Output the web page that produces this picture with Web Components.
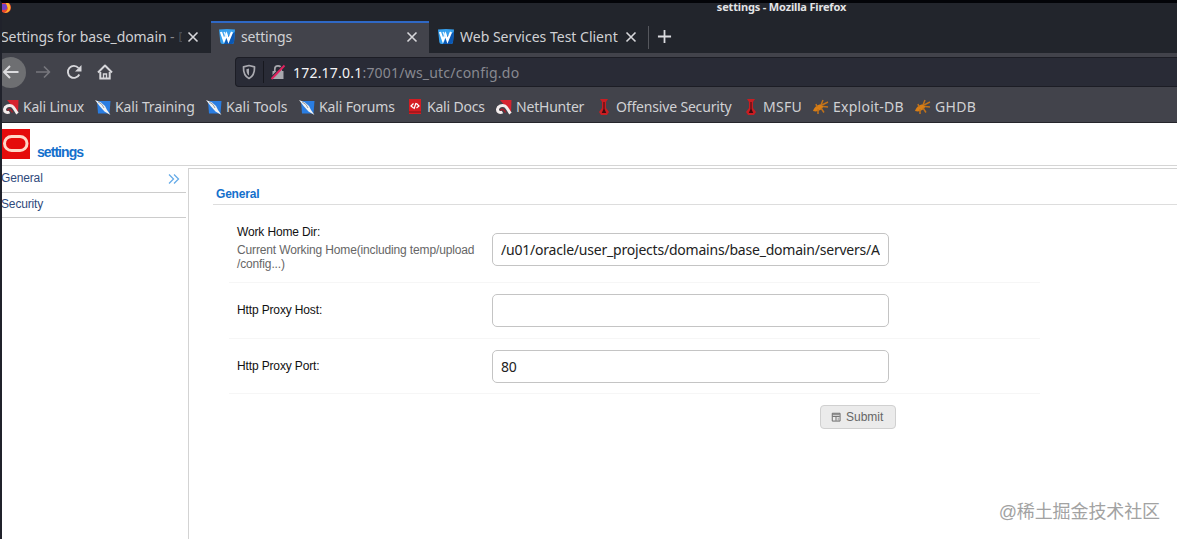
<!DOCTYPE html>
<html lang="en">
<head>
<meta charset="utf-8">
<title>settings</title>
<style>
  html, body { margin: 0; height: 100%; overflow: hidden; background: #fff; }
</style>
</head>
<body>
<browser-window heading="settings - Mozilla Firefox">
  <browser-tab slot="tabs" style="width: 209px" first>Settings for base_domain <span style="color: #85878c">-</span> <span style="color: #4a4d54">D</span></browser-tab>
  <browser-tab slot="tabs" style="width: 218px" icon="weblogic" active>settings</browser-tab>
  <browser-tab slot="tabs" style="width: 219px" icon="weblogic">Web Services Test Client</browser-tab>

  <book-mark slot="bookmarks" icon="dragon" style="width: 92px; letter-spacing: -.2px">Kali Linux</book-mark>
  <book-mark slot="bookmarks" icon="kali" style="width: 111px; letter-spacing: -.1px">Kali Training</book-mark>
  <book-mark slot="bookmarks" icon="kali" style="width: 93px">Kali Tools</book-mark>
  <book-mark slot="bookmarks" icon="kali" style="width: 108px; letter-spacing: -.15px">Kali Forums</book-mark>
  <book-mark slot="bookmarks" icon="docs" style="width: 89px; letter-spacing: -.2px">Kali Docs</book-mark>
  <book-mark slot="bookmarks" icon="dragon" style="width: 100px; letter-spacing: -.2px">NetHunter</book-mark>
  <book-mark slot="bookmarks" icon="offsec" style="width: 147px; letter-spacing: -.17px">Offensive Security</book-mark>
  <book-mark slot="bookmarks" icon="offsec" style="width: 70px; letter-spacing: .3px">MSFU</book-mark>
  <book-mark slot="bookmarks" icon="bug" style="width: 102px; letter-spacing: .25px">Exploit-DB</book-mark>
  <book-mark slot="bookmarks" icon="bug" style="letter-spacing: .3px">GHDB</book-mark>

  <settings-page heading="settings">
    <side-item slot="menu" current>General</side-item>
    <side-item slot="menu">Security</side-item>
    <form-row style="height: 60px" label="Work Home Dir:" value="/u01/oracle/user_projects/domains/base_domain/servers/A">Current Working Home(including temp/upload<br>/config...)</form-row>
    <form-row style="height: 55px" label="Http Proxy Host:"></form-row>
    <form-row style="height: 54px" label="Http Proxy Port:" value="80"></form-row>
    <submit-button>Submit</submit-button>
  </settings-page>
</browser-window>
<water-mark>@稀土掘金技术社区</water-mark>

<script>
const ICONS = {
  firefox: `<circle cx="8" cy="8" r="8" fill="#e8462f"/><circle cx="6" cy="7" r="4.6" fill="#7141c6"/><path d="M8 0c5 1 8 5 7 10-1 4-5 6-9 6 4-2 6-5 5-8-1-3-2-5-3-8z" fill="#ffb52e"/>`,
  weblogic: `<path d="M0 .5Q8-.5 16 .5L15 13q-.2 2-2 2H3.500Q1.500 15 1.300 13z" fill="#36a0ee"/><path d="M9 7l7-4-1 10q-.2 2-2 2H5z" fill="#0b58b4"/><path d="M2 3L5 11.500 7.500 5.500 9.500 11.500 13 3" fill="none" stroke="#fff" stroke-width="2.200"/><path d="M5.200 3l2 5" stroke="#e2f3ff" stroke-width="1.600"/>`,
  dragon: `<path d="M4 1h11.500l-.5 13z" fill="#d6232f"/><path d="M6.500 13C3.500 14.500 1.300 12.500 1.500 10.300 2 7 6 5.500 9 7c2.500 1.500 3 4.500 5.500 7.500" fill="none" stroke="#f4eded" stroke-width="3"/><path d="M4.500 11.500c1.500-2 3.500-1.500 5 2" fill="none" stroke="#a81d2a" stroke-width="1.500"/>`,
  kali: `<path d="M2 2h13.500l-1 12.500H3z" fill="#2a7de1"/><path d="M0 1l6 2.500 4 3.500 2 4 3.500 5-6-3.500-4.500-5z" fill="#f1f3f4"/><path d="M3 2.800l4 2.700 2 3.500" stroke="#6d7480" stroke-width=".7" fill="none"/>`,
  docs: `<path d="M2 0h12v15H2z" fill="#d51c22"/><path d="M2 13h12" stroke="#7b1216"/><path d="M6.500 4.500L4 7l2.500 2M9.500 4.500L12 7 9.500 9M9 4L7 10" stroke="#fff" stroke-width="1.200" fill="none"/>`,
  offsec: `<path d="M4 0h8l-2 3v6l3 4-2 3H5l-2-3 3-4V3z" fill="#c91d22"/><path d="M7.500 3h1v7l1.700 4H5.800l1.700-4z" fill="#3b0c10"/>`,
  bug: `<path d="M0 12c1.500-4 4-6.500 8-6.500l2.500 2c-2 3.500-6 6-10.500 4.500z" fill="#d87e16"/><path d="M8 6l2-5M9 6l6-3M10 7.500l5 .5M8 9l3 4.500M5 10v5M4 8L3 5" stroke="#c27219" stroke-width="1.500" fill="none"/>`,
  close: `<path d="M3.500 3.500l9 9M12.500 3.500l-9 9" stroke="#d7d7db" stroke-width="1.600"/>`,
  plus: `<path d="M8 1v14M1 8h14" stroke="#dcdce0" stroke-width="1.900"/>`,
  back: `<path d="M15.500 8H1M7 2L1 8l6 6" fill="none" stroke="#dcdcdf" stroke-width="2" stroke-linejoin="round"/>`,
  forward: `<path d="M1 8h13.500M9 2.500L14.500 8 9 13.500" fill="none" stroke="#77777d" stroke-width="1.700" stroke-linejoin="round"/>`,
  reload: `<path d="M13.300 10.500A6 6 0 1 1 12.500 4" fill="none" stroke="#d7d7db" stroke-width="1.900"/><path d="M15.500 1v6.500H9z" fill="#d7d7db"/>`,
  home: `<path d="M1 8.500L8 1.500l7 7" fill="none" stroke="#d7d7db" stroke-width="2" stroke-linejoin="round"/><path d="M3.300 8v6.500h9.400V8" fill="none" stroke="#d7d7db" stroke-width="2"/><path d="M6.500 14v-4h3v4" fill="none" stroke="#d7d7db" stroke-width="1.400"/>`,
  shield: `<path d="M8 1.500l5.500 1.300c.2 5.500-1 9.500-5.500 11.700C3.500 12.300 2.300 8.300 2.500 2.800z" fill="none" stroke="#aaaab0" stroke-width="1.700" stroke-linejoin="round"/><path d="M8 4.500v7c-2-1.300-2.600-3.500-2.600-6.300z" fill="#aaaab0"/>`,
  lock: `<path d="M2.500 7h11v8h-11z" fill="#a7a7ad"/><path d="M4.800 7V5a3.200 3.200 0 0 1 6.400 0v2" fill="none" stroke="#a7a7ad" stroke-width="1.700"/><path d="M1 13.500L13 1.500" stroke="#292b36" stroke-width="1.500"/><path d="M1.500 15L14.500 1.500" stroke="#e1225f" stroke-width="1.900"/>`,
  chevrons: `<path d="M3 3.500L7.500 8 3 12.500M8 3.500l4.500 4.500L8 12.500" fill="none" stroke="#66abe8" stroke-width="1.300"/>`,
  save: `<path d="M2 2h12.500v12.500H2z" fill="none" stroke="#6d6d6d" stroke-width="1.600"/><path d="M2 3.500h12M2 7h12M8 8v6" stroke="#777" stroke-width="1.700"/><path d="M11.500 9v5" stroke="#999" stroke-width="1.500"/>`,
};

function define(name, html, setup) {
  const template = document.createElement('template');
  template.innerHTML = html;

  customElements.define(name, class extends HTMLElement {
    constructor() {
      super();
      this.root = this.attachShadow({mode: 'open'});
      this.root.appendChild(template.content.cloneNode(true));
    }

    connectedCallback() {
      if (setup) setup(this, this.root);
    }
  });
}

define('ui-icon', `
  <style>
  :host { display: block; flex: none; width: 16px; height: 16px; }
  svg { display: block; width: 100%; height: 100%; overflow: visible; }
  </style>
  <svg viewBox="0 0 16 16"></svg>
`, (host, root) => {
  root.querySelector('svg').innerHTML = ICONS[host.getAttribute('name')] || '';
});

define('browser-tab', `
  <style>
  :host {
    display: flex; align-items: center; box-sizing: border-box; height: 32px;
    padding: 0 9px 2px 8px; border-top: 2px solid transparent; color: #d0d1d4;
    font-size: 14px; white-space: nowrap;
  }
  :host([active]) { background: #42434b; border-top-color: #2f68c5; letter-spacing: -.15px; }
  :host([first]) { padding-left: 0; padding-right: 10px; letter-spacing: -.07px; }
  :host([first]) .text { margin: 0 3px 0 -1px; }
  .icon { margin-right: 6px; }
  :host([icon]:not([active])) { padding-left: 9px; }
  .text { flex: 1; overflow: hidden; }
  </style>
  <ui-icon class="icon"></ui-icon>
  <span class="text"><slot></slot></span>
  <ui-icon name="close"></ui-icon>
`, (host, root) => {
  const icon = root.querySelector('.icon');
  if (host.hasAttribute('icon')) {
    icon.setAttribute('name', host.getAttribute('icon'));
    icon.connectedCallback();
  } else {
    icon.remove();
  }
});

define('book-mark', `
  <style>
  :host { display: flex; flex: none; align-items: center; gap: 4px; white-space: nowrap; }
  </style>
  <ui-icon></ui-icon>
  <span><slot></slot></span>
`, (host, root) => {
  const icon = root.querySelector('ui-icon');
  icon.setAttribute('name', host.getAttribute('icon'));
  icon.connectedCallback();
});

define('browser-window', `
  <style>
  :host {
    display: flex; flex-direction: column; box-sizing: border-box; height: 100vh;
    border-top: 3px solid #030408; border-left: 2px solid #20222b;
    font: 14px/20px "Noto Sans", sans-serif; color: #d0d1d4; overflow: hidden;
  }
  .title {
    display: flex; height: 18px; background: #22252c;
    font-size: 11px; line-height: 8px; font-weight: 700; color: #e3e4e6; letter-spacing: -.16px;
  }
  .title ui-icon { width: 11px; height: 11px; margin: -1px 0 0 -2px; }
  .title span { flex: 1; padding-left: 375px; text-align: center; }
  .tabs { display: flex; align-items: center; height: 32px; background: #22252c; }
  .divider { width: 1px; height: 23px; margin: 0 8px 0 0; background: #55575d; }
  .nav { display: flex; align-items: center; height: 38px; background: #42434b; }
  .back {
    display: flex; align-items: center; box-sizing: border-box; width: 31px; height: 31px;
    margin-left: -7px; padding-left: 8px; border-radius: 50%; background: #6e6f72;
  }
  .nav > ui-icon { margin-right: 15px; }
  .nav > ui-icon:first-of-type { margin-left: 9px; }
  .url {
    display: flex; align-items: center; flex: 1; box-sizing: border-box; height: 30px;
    margin-left: 107px; padding-left: 5px; border: 1px solid #1c1d25; border-right: 0;
    border-radius: 4px 0 0 4px; background: #292b36; color: #888991;
  }
  .url b { font-weight: 400; color: #f4f4f6; }
  .url i { width: 1px; height: 22px; margin: 0 6px; background: #17181f; }
  .url span { margin: 2px 0 0 7px; letter-spacing: .21px; }
  .bookmarks {
    display: flex; align-items: center; box-sizing: border-box; height: 32px; padding-left: 1px;
    border-bottom: 1px solid #25252b; background: #42434b;
  }
  .page { flex: 1; min-height: 0; }
  </style>
  <div class="title"><ui-icon name="firefox"></ui-icon><span></span></div>
  <div class="tabs">
    <slot name="tabs"></slot>
    <div class="divider"></div>
    <ui-icon name="plus" style="width: 15px; height: 15px; margin-bottom: 2px"></ui-icon>
  </div>
  <div class="nav">
    <div class="back"><ui-icon name="back"></ui-icon></div>
    <ui-icon name="forward"></ui-icon>
    <ui-icon name="reload"></ui-icon>
    <ui-icon name="home"></ui-icon>
    <div class="url">
      <ui-icon name="shield"></ui-icon><i></i>
      <ui-icon name="lock"></ui-icon>
      <span><b>172.17.0.1</b>:7001/ws_utc/config.do</span>
    </div>
  </div>
  <div class="bookmarks"><slot name="bookmarks"></slot></div>
  <div class="page"><slot></slot></div>
`, (host, root) => {
  root.querySelector('.title span').textContent = host.getAttribute('heading');
});

define('settings-page', `
  <style>
  :host {
    display: flex; flex-direction: column; height: 100%; background: #fff; color: #222;
    font: 12px/14px "Liberation Sans", Arial, sans-serif;
  }
  header {
    display: flex; align-items: flex-start; box-sizing: border-box; height: 43px; padding-top: 6px;
    border-bottom: 1px solid #d5d5d5;
  }
  .logo { display: block; width: 28px; height: 30px; }
  h1 {
    margin: 15px 0 0 7px; font-size: 14px; line-height: 16px; letter-spacing: -.95px; color: #1470cc;
  }
  .body { display: flex; flex: 1; min-height: 0; }
  nav { width: 184px; margin-right: 2px; }
  main {
    flex: 1; box-sizing: border-box; margin-top: 2px; border: solid #d3d3d3; border-width: 1px 0 0 1px;
    padding: 17px 0 0 24px;
  }
  h2 {
    height: 18px; margin: 0; padding-left: 3px; border-bottom: 1px solid #ddd;
    font-size: 12px; line-height: 17px; letter-spacing: -.2px; color: #1470cc;
  }
  .form { width: 811px; margin: 17px 0 0 16px; }
  </style>
  <header>
    <svg class="logo" viewBox="0 0 28 30">
      <path d="M0 0h28v30H0z" fill="#e50b0b"/>
      <rect x="2.500" y="7.500" width="22.500" height="14" rx="7" fill="none" stroke="#ffd9c9" stroke-width="3"/>
    </svg>
    <h1></h1>
  </header>
  <div class="body">
    <nav><slot name="menu"></slot></nav>
    <main>
      <h2>General</h2>
      <div class="form"><slot></slot></div>
    </main>
  </div>
`, (host, root) => {
  root.querySelector('h1').textContent = host.getAttribute('heading');
});

define('side-item', `
  <style>
  :host {
    display: flex; align-items: center; justify-content: space-between; box-sizing: border-box;
    height: 25px; padding: 0 4px 3px 0; border-bottom: 1px solid #ccc; color: #2f4a7c;
    letter-spacing: -.15px;
  }
  :host([current]) { height: 27px; padding-bottom: 2px; }
  :host(:not([current])) ui-icon { display: none; }
  span { margin-left: -1px; }
  ui-icon { margin-top: 2px; }
  </style>
  <span><slot></slot></span>
  <ui-icon name="chevrons"></ui-icon>
`);

define('form-row', `
  <style>
  :host {
    display: grid; grid-template-columns: 255px 397px; padding-left: 8px;
    border-bottom: 1px solid #f6f6f6; letter-spacing: -.14px;
  }
  label { display: block; padding-top: 3px; color: #111; }
  :host(:empty) label { padding-top: 20px; }
  small { display: block; margin-top: 4px; font-size: 12px; line-height: 14px; color: #666; white-space: nowrap; }
  input {
    box-sizing: border-box; width: 397px; height: 33px; margin: 11px 0 0; padding: 0 8px 1px;
    border: 1px solid #c4c4c4; border-radius: 5px; background: #fff; color: #222;
    font: 14px "Noto Sans", sans-serif; letter-spacing: -.21px;
  }
  </style>
  <div><label></label><small><slot></slot></small></div>
  <input>
`, (host, root) => {
  root.querySelector('label').textContent = host.getAttribute('label');
  root.querySelector('input').value = host.getAttribute('value') || '';
});

define('submit-button', `
  <style>
  :host { display: block; margin: 11px 0 0 591px; }
  button {
    display: flex; align-items: center; box-sizing: border-box; width: 76px; height: 24px;
    padding: 0 0 0 10px; gap: 5px; border: 1px solid #d0d0d0; border-radius: 4px; background: #ebebeb;
    font: 12px "Liberation Sans", Arial, sans-serif; color: #666;
  }
  ui-icon { width: 10px; height: 10px; }
  </style>
  <button><ui-icon name="save"></ui-icon><slot></slot></button>
`);

// Stamp laid over the bottom right corner of the page.
define('water-mark', `
  <style>
  :host {
    position: absolute; right: 17px; bottom: 14px; color: #a2a2a2;
    font: 18px/26px "Liberation Sans", "Noto Sans CJK SC", sans-serif; letter-spacing: -.1px;
  }
  </style>
  <slot></slot>
`);
</script>
</body>
</html>
